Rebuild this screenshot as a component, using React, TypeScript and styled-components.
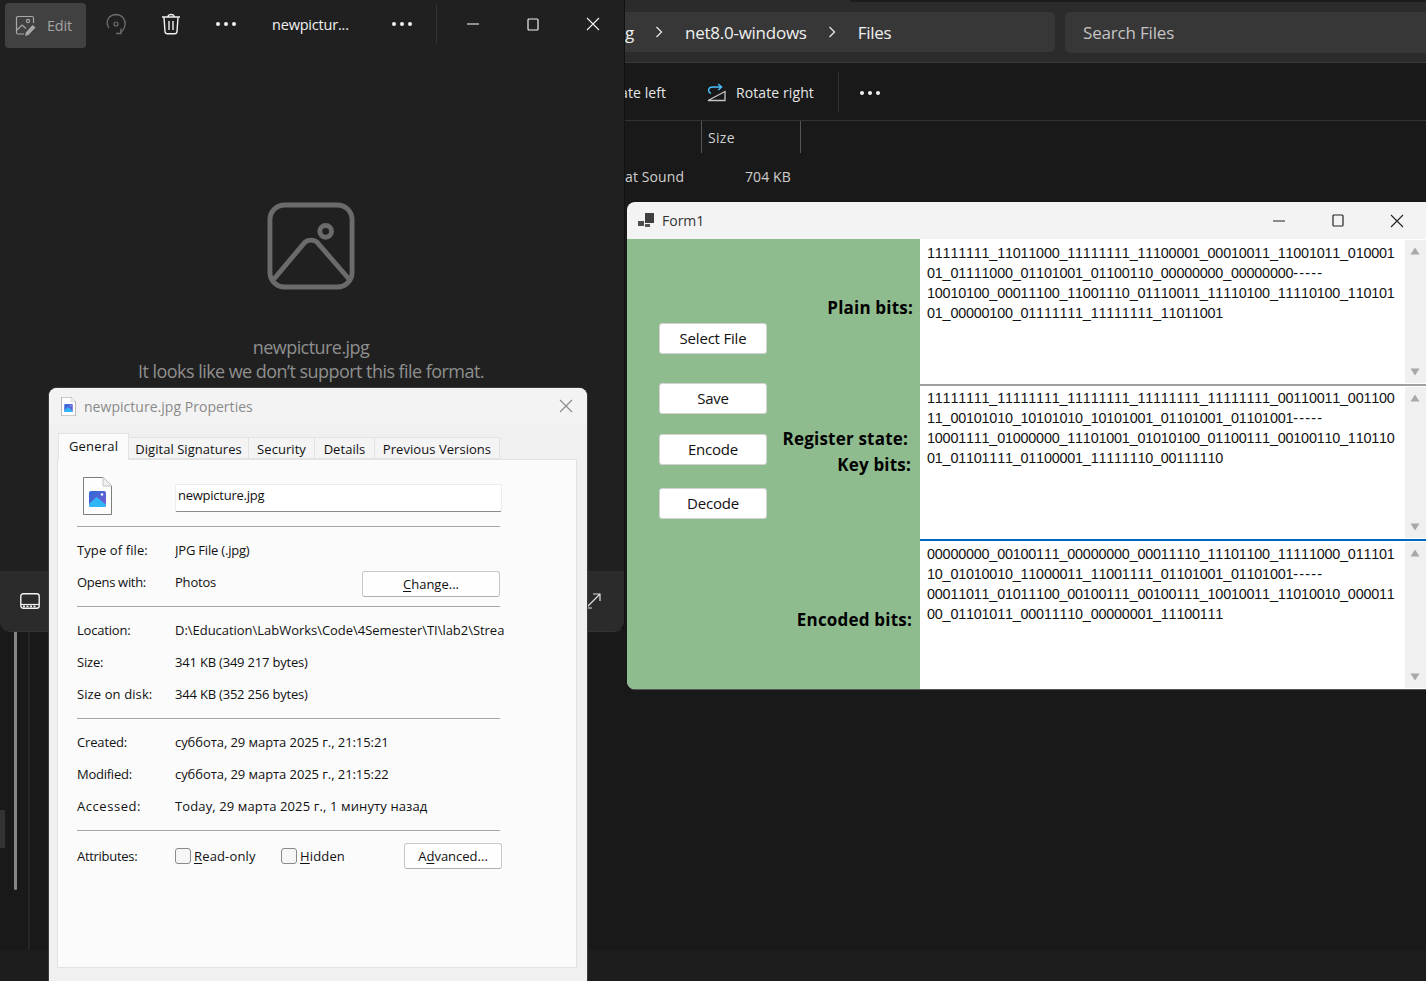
import React from "react";
import styled, { createGlobalStyle } from "styled-components";

const Global = createGlobalStyle`
  html, body { margin: 0; padding: 0; background: #1a1a1a; }
  body { width: 1426px; height: 981px; overflow: hidden; font-family: "Noto Sans", "Open Sans", sans-serif; }
  * { box-sizing: border-box; }
`;

const UI = `"Open Sans", "Noto Sans", sans-serif`;

const Desktop = styled.div`
  position: relative;
  width: 1426px;
  height: 981px;
  overflow: hidden;
  background: #191919;
`;

/* ---------- Explorer (background window) ---------- */
const Explorer = styled.div`
  position: absolute;
  inset: 0;
  display: flex;
  flex-direction: column;
  color: #e6e6e6;
  font-family: ${UI};
`;
const ExplorerHeader = styled.div`
  height: 63px;
  flex: none;
  background: #2b2b2b;
  border-bottom: 1px solid #3a3a3a;
  display: flex;
  padding: 12px 0 0 560px;
  gap: 10px;
  position: relative;
`;
const TabStripEdge = styled.div`
  position: absolute;
  left: 850px;
  right: 0;
  top: 0;
  height: 2px;
  background: #1c1c1c;
`;
const AddressBar = styled.div`
  width: 495px;
  height: 40px;
  background: #373737;
  border-radius: 5px;
  display: flex;
  align-items: center;
  padding-left: 65px;
  font-size: 17px;
  letter-spacing: -0.25px;
  color: #f0f0f0;
`;
const Crumb = styled.span`
  white-space: nowrap;
`;
const Chevron = styled.svg`
  width: 10px;
  height: 12px;
  margin: 0 21px 0 20px;
  flex: none;
`;
const SearchBar = styled.div`
  flex: 1;
  height: 41px;
  background: #373737;
  border-radius: 5px 0 0 5px;
  display: flex;
  align-items: center;
  padding-left: 18px;
  font-size: 17px;
  letter-spacing: -0.18px;
  color: #c4c4c4;
`;
const ExplorerToolbar = styled.div`
  height: 58px;
  flex: none;
  border-bottom: 1px solid #333;
  background: #191919;
  display: flex;
  align-items: center;
  padding: 2px 0 0 620px;
  font-size: 14px;
  letter-spacing: 0.1px;
`;
const ToolLabel = styled.span<{ $w: number }>`
  width: ${(p) => p.$w}px;
  white-space: nowrap;
  flex: none;
`;
const RotateIcon = styled.svg`
  flex: none;
  margin-right: 10px;
`;
const ToolDivider = styled.div`
  width: 1px;
  height: 40px;
  background: #333;
  margin: -2px 20px 0 23px;
`;
const MoreIcon = styled.svg`
  flex: none;
`;
const ColumnHeader = styled.div`
  height: 33px;
  flex: none;
  padding-left: 701px;
  display: flex;
`;
const ColumnCell = styled.div`
  width: 100px;
  height: 32px;
  border-left: 1px solid #555;
  border-right: 1px solid #555;
  padding-left: 6px;
  font-size: 14px;
  line-height: 33px;
  letter-spacing: 0.3px;
  color: #cfcfcf;
`;
const FileRow = styled.div`
  display: flex;
  height: 44px;
  padding-left: 625px;
  align-items: center;
  font-size: 14px;
  letter-spacing: 0.1px;
  color: #cfcfcf;
`;
const FileKind = styled.span`
  width: 120px;
`;
const ExplorerBody = styled.div`
  flex: 1;
  position: relative;
`;
const ExplorerStatus = styled.div`
  height: 31px;
  flex: none;
  background: #1d1d1d;
`;
const SideScroll = styled.div`
  position: absolute;
  left: 14px;
  top: 432px;
  width: 3px;
  height: 260px;
  background: #858585;
  border-radius: 2px;
`;
const SideLine = styled.div`
  position: absolute;
  left: 28px;
  top: 432px;
  width: 2px;
  height: 320px;
  background: #262626;
`;
const SideSelect = styled.div`
  position: absolute;
  left: 0;
  top: 612px;
  width: 5px;
  height: 38px;
  background: #333;
`;

/* ---------- Photos ---------- */
const Photos = styled.div`
  position: absolute;
  left: 0;
  top: 0;
  width: 625px;
  height: 632px;
  background: #202020;
  border-right: 1px solid #111;
  border-bottom: 1px solid #333;
  border-radius: 0 0 10px 10px;
  display: flex;
  flex-direction: column;
  color: #fff;
  font-family: ${UI};
`;
const PhotosBar = styled.div`
  height: 48px;
  flex: none;
  display: flex;
  align-items: center;
  position: relative;
`;
const EditButton = styled.div`
  width: 81px;
  height: 45px;
  margin: 3px 0 0 5px;
  border-radius: 4px;
  background: #414141;
  display: flex;
  align-items: center;
  gap: 10px;
  padding-left: 10px;
  font-size: 14.5px;
  letter-spacing: -0.2px;
  color: #a3a3a3;
`;
const BarIcon = styled.svg<{ $ml: number }>`
  flex: none;
  margin-left: ${(p) => p.$ml}px;
`;
const FileTitle = styled.span`
  margin-left: 35px;
  font-size: 14.5px;
  letter-spacing: -0.2px;
  width: 107px;
  white-space: nowrap;
  color: #f2f2f2;
`;
const BarDivider = styled.div`
  width: 1px;
  height: 40px;
  background: #333;
  margin-left: 23px;
`;
const PhotosCenter = styled.div`
  flex: 1;
  display: flex;
  flex-direction: column;
  align-items: center;
  padding-top: 154px;
  color: #8f8f8f;
  font-size: 18px;
  letter-spacing: -0.55px;
  line-height: 24px;
`;
const BrokenImage = styled.svg`
  margin-right: 2px;
  flex: none;
`;
const PhotoMessage = styled.div`
  margin-top: 45px;
  text-align: center;
  margin-right: 2px;
`;
const PhotosFoot = styled.div`
  height: 60px;
  flex: none;
  background: #2b2b2b;
  border-radius: 0 0 10px 10px;
  display: flex;
  align-items: center;
  justify-content: space-between;
  padding: 0 23px 0 20px;
`;

/* ---------- Properties dialog ---------- */
const Dialog = styled.div`
  position: absolute;
  left: 49px;
  top: 388px;
  width: 538px;
  height: 593px;
  background: #f0f0f0;
  border-radius: 8px 8px 0 0;
  box-shadow: 0 0 0 1px #3c3c3c;
  font-family: ${UI};
  font-size: 13px;
  letter-spacing: 0;
  color: #111;
  display: flex;
  flex-direction: column;
`;
const DialogTitle = styled.div`
  height: 36px;
  flex: none;
  background: #f3f3f3;
  border-radius: 8px 8px 0 0;
  display: flex;
  align-items: center;
  padding-left: 12px;
  font-size: 14px;
  letter-spacing: 0.03px;
  color: #8a8a8a;
`;
const DialogTitleText = styled.span`
  margin-left: 8px;
  flex: 1;
`;
const CloseIcon = styled.svg`
  flex: none;
  margin-right: 14px;
`;
const Tabs = styled.div`
  display: flex;
  align-items: flex-end;
  height: 35px;
  flex: none;
  padding-left: 9px;
`;
const Tab = styled.div<{ $active?: boolean; $w: number }>`
  width: ${(p) => p.$w}px;
  height: ${(p) => (p.$active ? 27 : 22)}px;
  margin-bottom: ${(p) => (p.$active ? -1 : 0)}px;
  position: relative;
  z-index: ${(p) => (p.$active ? 1 : 0)};
  background: ${(p) => (p.$active ? "#fbfbfb" : "#f4f4f4")};
  border: 1px solid #e3e3e3;
  border-bottom: ${(p) => (p.$active ? "none" : "1px solid #e3e3e3")};
  border-left: ${(p) => (p.$active ? "1px solid #e3e3e3" : "none")};
  text-align: center;
  line-height: ${(p) => (p.$active ? 24 : 22)}px;
  white-space: nowrap;
  letter-spacing: ${(p) => (p.$active ? 0.2 : 0.05)}px;
`;
const TabPanel = styled.div`
  margin: 0 10px 13px 8px;
  height: 509px;
  background: #fbfbfb;
  border: 1px solid #e3e3e3;
  padding: 17px 0 0 19px;
  display: flex;
  flex-direction: column;
  position: relative;
`;
const NameRow = styled.div`
  display: flex;
  height: 49px;
  flex: none;
  align-items: flex-start;
  padding-left: 6px;
`;
const NameInput = styled.div`
  margin-left: 63px;
  margin-top: 7px;
  width: 327px;
  height: 28px;
  background: #fff;
  border: 1px solid #ececec;
  border-bottom: 1px solid #8a8a8a;
  border-radius: 2px;
  padding-left: 2px;
  line-height: 21px;
  letter-spacing: -0.25px;
  color: #111;
`;
const Rule = styled.div<{ $mt?: number }>`
  width: 423px;
  height: 1px;
  background: #a6a6a6;
  flex: none;
  margin-top: ${(p) => p.$mt ?? 0}px;
`;
const InfoRow = styled.div<{ $mt?: number }>`
  display: flex;
  height: 32px;
  flex: none;
  align-items: center;
  margin-top: ${(p) => p.$mt ?? 0}px;
  position: relative;
  white-space: nowrap;
`;
const InfoKey = styled.span<{ $ls?: number }>`
  width: 98px;
  flex: none;
  letter-spacing: ${(p) => p.$ls ?? 0}px;
`;
const InfoValue = styled.span<{ $w?: number; $ls?: number }>`
  width: ${(p) => p.$w ?? 329}px;
  overflow: hidden;
  flex: none;
  letter-spacing: ${(p) => p.$ls ?? -0.2}px;
`;
const WinButton = styled.div<{ $w: number; $mt?: number }>`
  width: ${(p) => p.$w}px;
  height: 26px;
  margin-top: ${(p) => p.$mt ?? 0}px;
  background: #fefefe;
  border: 1px solid #c9c9c9;
  border-bottom-color: #b0b0b0;
  border-radius: 3px;
  text-align: center;
  line-height: 24px;
  flex: none;
`;
const CheckBox = styled.div`
  width: 16px;
  height: 16px;
  background: #f6f6f6;
  border: 1px solid #8a8a8a;
  border-radius: 3px;
  flex: none;
  margin-right: 3px;
`;
const CheckLabel = styled.span<{ $w: number }>`
  width: ${(p) => p.$w}px;
  flex: none;
  letter-spacing: 0.15px;
`;
const Key = styled.span`
  text-decoration: underline;
  text-underline-offset: 2px;
`;

/* ---------- Form1 ---------- */
const Form = styled.div`
  position: absolute;
  left: 627px;
  top: 202px;
  width: 799px;
  height: 487px;
  background: #f3f3f3;
  border-radius: 8px 0 0 8px;
  overflow: hidden;
  display: flex;
  flex-direction: column;
  font-family: "Noto Sans", sans-serif;
  box-shadow: 0 1px 0 #555;
`;
const FormTitle = styled.div`
  height: 37px;
  flex: none;
  display: flex;
  align-items: center;
  padding-left: 11px;
  font-family: ${UI};
  font-size: 14px;
  letter-spacing: 0;
  color: #333;
`;
const FormTitleText = styled.span`
  margin-left: 8px;
  flex: 1;
`;
const TitleEndSpace = styled.span`
  width: 22px;
  flex: none;
`;
const FormBody = styled.div`
  flex: 1;
  display: flex;
  min-height: 0;
`;
const GreenPanel = styled.div`
  width: 293px;
  flex: none;
  background: #8fbc8f;
  display: flex;
`;
const ButtonColumn = styled.div`
  width: 142px;
  flex: none;
  padding: 84px 0 0 32px;
  display: flex;
  flex-direction: column;
`;
const FormButton = styled.div<{ $mt: number }>`
  width: 108px;
  height: 31px;
  margin-top: ${(p) => p.$mt}px;
  background: #fff;
  border: 1px solid #d2d2d2;
  border-radius: 3px;
  text-align: center;
  line-height: 29px;
  font-family: ${UI};
  font-size: 15px;
  letter-spacing: -0.2px;
  color: #111;
`;
const LabelColumn = styled.div`
  flex: 1;
  display: flex;
  flex-direction: column;
  align-items: flex-end;
`;
const FieldLabel = styled.div<{ $mt: number; $mr: number }>`
  margin-top: ${(p) => p.$mt}px;
  margin-right: ${(p) => p.$mr}px;
  height: 24px;
  line-height: 24px;
  font-family: ${UI};
  font-weight: 700;
  font-size: 17px;
  letter-spacing: 0.2px;
  color: #000;
  white-space: nowrap;
`;
const FieldsColumn = styled.div`
  flex: 1;
  display: flex;
  flex-direction: column;
  background: #fff;
  min-width: 0;
`;
const Field = styled.div<{ $h: number; $line: string; $lh: number }>`
  height: ${(p) => p.$h}px;
  flex: none;
  display: flex;
  border-bottom: ${(p) => p.$lh}px solid ${(p) => p.$line};
`;
const BitsText = styled.div<{ $pt: number }>`
  flex: 1;
  padding: ${(p) => p.$pt}px 0 0 7px;
  font-family: "Liberation Sans", Arial, sans-serif;
  font-size: 14.4px;
  font-kerning: none;
  line-height: 20px;
  letter-spacing: -0.21px;
  color: #111;
  white-space: pre;
  overflow: hidden;
`;
const Dashes = styled.span`
  letter-spacing: 1.2px;
`;
const ScrollBar = styled.div`
  width: 21px;
  flex: none;
  background: #f0f0f0;
  display: flex;
  flex-direction: column;
  justify-content: space-between;
  align-items: center;
  padding: 7px 1px 7px 0;
  margin: 1px 0;
`;
const Arrow = styled.svg`
  display: block;
`;

/* ---------- small drawn parts ---------- */
const Dots = ({ ml }: { ml: number }) => (
  <BarIcon $ml={ml} width="22" height="6" viewBox="0 0 22 6">
    <circle cx="3" cy="3" r="2" fill="#f2f2f2" />
    <circle cx="11" cy="3" r="2" fill="#f2f2f2" />
    <circle cx="19" cy="3" r="2" fill="#f2f2f2" />
  </BarIcon>
);

const ChevronIcon = () => (
  <Chevron viewBox="0 0 10 12">
    <path d="M2.5 1 L7.5 6 L2.5 11" fill="none" stroke="#e6e6e6" strokeWidth="1.3" />
  </Chevron>
);

const ImageFileIcon = ({ w, h, id }: { w: number; h: number; id: string }) => (
  <svg width={w} height={h} viewBox="0 0 29 38">
    <defs>
      <linearGradient id={id} x1="0" y1="0" x2="1" y2="1">
        <stop offset="0" stopColor="#2a6ad8" />
        <stop offset="1" stopColor="#7c5cd0" />
      </linearGradient>
    </defs>
    <path d="M0.5 0.5 H20 L28.5 9 V37.5 H0.5 Z" fill="#fdfdfd" stroke="#7d7d7d" />
    <path d="M20 0.5 V9 H28.5" fill="#f1f1f1" stroke="#c4c4c4" />
    <rect x="6" y="14" width="17" height="16" rx="2" fill={`url(#${id})`} />
    <path d="M6 27 L13.5 20 L23 27.5 V28 A2 2 0 0 1 21 30 H8 A2 2 0 0 1 6 28 Z" fill="#31b6f5" />
    <circle cx="19" cy="17.5" r="1.2" fill="#fff" />
  </svg>
);

const WinGlyphs = ({ color, w1, w2, w3 }: { color: string; w1: number; w2: number; w3: number }) => (
  <>
    <BarIcon $ml={w1} width="14" height="14" viewBox="0 0 14 14">
      <path d="M1 7 H13" stroke={color} strokeWidth="1.1" />
    </BarIcon>
    <BarIcon $ml={w2} width="12" height="13" viewBox="0 0 12 13">
      <rect x="1" y="1" width="10" height="11" rx="1" fill="none" stroke={color} strokeWidth="1.2" />
    </BarIcon>
    <BarIcon $ml={w3} width="14" height="14" viewBox="0 0 14 14">
      <path d="M1 1 L13 13 M13 1 L1 13" stroke={color} strokeWidth="1.1" />
    </BarIcon>
  </>
);

const ScrollArrows = () => (
  <ScrollBar>
    <Arrow width="10" height="8" viewBox="0 0 10 8"><path d="M5 0.5 L9.5 7.5 H0.5 Z" fill="#a8a8a8" /></Arrow>
    <Arrow width="10" height="8" viewBox="0 0 10 8"><path d="M0.5 0.5 H9.5 L5 7.5 Z" fill="#a8a8a8" /></Arrow>
  </ScrollBar>
);

const Bits = ({ pt, lines }: { pt: number; lines: [string, string, string, string] }) => (
  <BitsText $pt={pt}>
    {lines[0]}
    {"\n"}
    {lines[1]}
    <Dashes>-----</Dashes>
    {"\n"}
    {lines[2]}
    {"\n"}
    {lines[3]}
  </BitsText>
);

export default function App() {
  return (
    <Desktop>
      <Global />
      <Explorer>
        <ExplorerHeader>
          <TabStripEdge />
          <AddressBar>
            <Crumb>g</Crumb>
            <ChevronIcon />
            <Crumb>net8.0-windows</Crumb>
            <ChevronIcon />
            <Crumb>Files</Crumb>
          </AddressBar>
          <SearchBar>Search Files</SearchBar>
        </ExplorerHeader>
        <ExplorerToolbar>
          <ToolLabel $w={86}>ate left</ToolLabel>
          <RotateIcon width="20" height="20" viewBox="0 0 20 20">
            <path d="M5 10.5 C1.5 9 1.5 4 7 4 H15.5 M12.2 1 L15.7 4 L12.2 7" fill="none" stroke="#4cc2ff" strokeWidth="1.3" />
            <path d="M2 17.5 L19 8.5 V17.5 Z" fill="none" stroke="#c4c4c4" strokeWidth="1.3" />
          </RotateIcon>
          <ToolLabel $w={79}>Rotate right</ToolLabel>
          <ToolDivider />
          <MoreIcon width="22" height="6" viewBox="0 0 22 6">
            <circle cx="3" cy="3" r="2" fill="#f2f2f2" />
            <circle cx="11" cy="3" r="2" fill="#f2f2f2" />
            <circle cx="19" cy="3" r="2" fill="#f2f2f2" />
          </MoreIcon>
        </ExplorerToolbar>
        <ColumnHeader>
          <ColumnCell>Size</ColumnCell>
        </ColumnHeader>
        <FileRow>
          <FileKind>at Sound</FileKind>
          <span>704 KB</span>
        </FileRow>
        <ExplorerBody>
          <SideScroll />
          <SideLine />
          <SideSelect />
        </ExplorerBody>
        <ExplorerStatus />
      </Explorer>

      <Photos>
        <PhotosBar>
          <EditButton>
            <svg width="22" height="22" viewBox="0 0 22 22">
              <path d="M9 19 H3 a1.5 1.5 0 0 1 -1.5 -1.5 V3 a1.5 1.5 0 0 1 1.5 -1.5 H17 a1.5 1.5 0 0 1 1.5 1.5 V8" fill="none" stroke="#a8a8a8" strokeWidth="1.2" />
              <path d="M2 15 L7 10 L11 13.5" fill="none" stroke="#a8a8a8" strokeWidth="1.2" />
              <circle cx="13" cy="6" r="1.6" fill="none" stroke="#a8a8a8" strokeWidth="1.1" />
              <path d="M17.5 10 L20.5 12.5 L13.5 20 L10 21 L10.8 17.5 Z" fill="#a8a8a8" />
            </svg>
            Edit
          </EditButton>
          <BarIcon $ml={19} width="22" height="22" viewBox="0 0 22 22">
            <path d="M4 15 C0 9 3 2 11 1.5 C17 1.5 21 7 20 12 C19.5 15 18 18 15 19.5" fill="none" stroke="#6c6c6c" strokeWidth="1.3" />
            <path d="M11 20.5 H16 V15.5" fill="none" stroke="#6c6c6c" strokeWidth="1.3" />
            <circle cx="11" cy="11" r="2" fill="none" stroke="#6c6c6c" strokeWidth="1.2" />
          </BarIcon>
          <BarIcon $ml={34} width="20" height="22" viewBox="0 0 20 22">
            <path d="M1 4 H19 M7 3.5 C7 0.8 13 0.8 13 3.5" fill="none" stroke="#f2f2f2" strokeWidth="1.4" />
            <path d="M3 4.5 L4 18.5 C4.1 20 5 20.8 6.5 20.8 H13.5 C15 20.8 15.9 20 16 18.5 L17 4.5" fill="none" stroke="#f2f2f2" strokeWidth="1.4" />
            <path d="M8 8 V17 M12 8 V17" fill="none" stroke="#f2f2f2" strokeWidth="1.4" />
          </BarIcon>
          <Dots ml={34} />
          <FileTitle>newpictur...</FileTitle>
          <Dots ml={12} />
          <BarDivider />
          <WinGlyphs color="#f0f0f0" w1={29} w2={47} w3={47} />
        </PhotosBar>
        <PhotosCenter>
          <BrokenImage width="88" height="88" viewBox="0 0 90 90">
            <rect x="3" y="3" width="84" height="84" rx="15" fill="none" stroke="#6b6b6b" strokeWidth="5" />
            <path d="M7 79 L38 42 C41 38 49 38 52 42 L84 79" fill="none" stroke="#6b6b6b" strokeWidth="5" strokeLinejoin="round" />
            <circle cx="60" cy="30" r="6" fill="none" stroke="#6b6b6b" strokeWidth="5" />
          </BrokenImage>
          <PhotoMessage>
            newpicture.jpg
            <br />
            It looks like we don’t support this file format.
          </PhotoMessage>
        </PhotosCenter>
        <PhotosFoot>
          <svg width="20" height="16" viewBox="0 0 20 16">
            <rect x="0.8" y="0.8" width="18.4" height="14.4" rx="2.5" fill="none" stroke="#f2f2f2" strokeWidth="1.4" />
            <path d="M1 11.5 H19" stroke="#f2f2f2" strokeWidth="1.2" />
            <path d="M3 13.4 H17" stroke="#f2f2f2" strokeWidth="1.6" strokeDasharray="2 1.5" />
          </svg>
          <svg width="16" height="16" viewBox="0 0 16 16">
            <path d="M1 15 L15 1 M8 1 H15 V8 M1 9 V15 H7" fill="none" stroke="#e0e0e0" strokeWidth="1.2" />
          </svg>
        </PhotosFoot>
      </Photos>

      <Dialog>
        <DialogTitle>
          <ImageFileIcon w={15} h={19} id="imgSkySmall" />
          <DialogTitleText>newpicture.jpg Properties</DialogTitleText>
          <CloseIcon width="14" height="14" viewBox="0 0 14 14">
            <path d="M1 1 L13 13 M13 1 L1 13" stroke="#8a8a8a" strokeWidth="1.1" />
          </CloseIcon>
        </DialogTitle>
        <Tabs>
          <Tab $active $w={71}>General</Tab>
          <Tab $w={120}>Digital Signatures</Tab>
          <Tab $w={66}>Security</Tab>
          <Tab $w={60}>Details</Tab>
          <Tab $w={125}>Previous Versions</Tab>
        </Tabs>
        <TabPanel>
          <NameRow>
            <ImageFileIcon w={29} h={38} id="imgSkyLarge" />
            <NameInput>newpicture.jpg</NameInput>
          </NameRow>
          <Rule />
          <InfoRow $mt={7}>
            <InfoKey $ls={0.1}>Type of file:</InfoKey>
            <InfoValue>JPG File (.jpg)</InfoValue>
          </InfoRow>
          <InfoRow>
            <InfoKey $ls={-0.3}>Opens with:</InfoKey>
            <InfoValue $w={187}>Photos</InfoValue>
            <WinButton $w={138} $mt={4}><Key>C</Key>hange...</WinButton>
          </InfoRow>
          <Rule $mt={8} />
          <InfoRow $mt={7}>
            <InfoKey $ls={-0.2}>Location:</InfoKey>
            <InfoValue $ls={-0.03}>D:\Education\LabWorks\Code\4Semester\TI\lab2\Strea</InfoValue>
          </InfoRow>
          <InfoRow>
            <InfoKey $ls={-0.2}>Size:</InfoKey>
            <InfoValue>341 KB (349 217 bytes)</InfoValue>
          </InfoRow>
          <InfoRow>
            <InfoKey $ls={0.1}>Size on disk:</InfoKey>
            <InfoValue>344 KB (352 256 bytes)</InfoValue>
          </InfoRow>
          <Rule $mt={8} />
          <InfoRow $mt={7}>
            <InfoKey $ls={-0.15}>Created:</InfoKey>
            <InfoValue $ls={-0.07}>суббота, 29 марта 2025 г., 21:15:21</InfoValue>
          </InfoRow>
          <InfoRow>
            <InfoKey $ls={-0.25}>Modified:</InfoKey>
            <InfoValue $ls={-0.07}>суббота, 29 марта 2025 г., 21:15:22</InfoValue>
          </InfoRow>
          <InfoRow>
            <InfoKey $ls={0.55}>Accessed:</InfoKey>
            <InfoValue $ls={0.12}>Today, 29 марта 2025 г., 1 минуту назад</InfoValue>
          </InfoRow>
          <Rule $mt={8} />
          <InfoRow $mt={9}>
            <InfoKey $ls={-0.3}>Attributes:</InfoKey>
            <CheckBox />
            <CheckLabel $w={87}><Key>R</Key>ead-only</CheckLabel>
            <CheckBox />
            <CheckLabel $w={104}><Key>H</Key>idden</CheckLabel>
            <WinButton $w={98}>A<Key>d</Key>vanced...</WinButton>
          </InfoRow>
        </TabPanel>
      </Dialog>

      <Form>
        <FormTitle>
          <svg width="16" height="16" viewBox="0 0 16 16">
            <rect x="7" y="0" width="9" height="10" fill="#3f3f3f" />
            <rect x="0" y="8" width="6" height="5" fill="#4c4c4c" />
            <rect x="7" y="11" width="5" height="3" fill="#555" />
          </svg>
          <FormTitleText>Form1</FormTitleText>
          <WinGlyphs color="#222" w1={0} w2={46} w3={46} />
          <TitleEndSpace />
        </FormTitle>
        <FormBody>
          <GreenPanel>
            <ButtonColumn>
              <FormButton $mt={0}>Select File</FormButton>
              <FormButton $mt={29}>Save</FormButton>
              <FormButton $mt={20}>Encode</FormButton>
              <FormButton $mt={23}>Decode</FormButton>
            </ButtonColumn>
            <LabelColumn>
              <FieldLabel $mt={57} $mr={7}>Plain bits:</FieldLabel>
              <FieldLabel $mt={107} $mr={12}>Register state:</FieldLabel>
              <FieldLabel $mt={2} $mr={9}>Key bits:</FieldLabel>
              <FieldLabel $mt={131} $mr={8}>Encoded bits:</FieldLabel>
            </LabelColumn>
          </GreenPanel>
          <FieldsColumn>
            <Field $h={147} $line="#a0a0a0" $lh={2}>
              <Bits
                pt={4}
                lines={[
                  "11111111_11011000_11111111_11100001_00010011_11001011_010001",
                  "01_01111000_01101001_01100110_00000000_00000000",
                  "10010100_00011100_11001110_01110011_11110100_11110100_110101",
                  "01_00000100_01111111_11111111_11011001",
                ]}
              />
              <ScrollArrows />
            </Field>
            <Field $h={155} $line="#0067c0" $lh={2}>
              <Bits
                pt={2}
                lines={[
                  "11111111_11111111_11111111_11111111_11111111_00110011_001100",
                  "11_00101010_10101010_10101001_01101001_01101001",
                  "10001111_01000000_11101001_01010100_01100111_00100110_110110",
                  "01_01101111_01100001_11111110_00111110",
                ]}
              />
              <ScrollArrows />
            </Field>
            <Field $h={148} $line="#808080" $lh={0}>
              <Bits
                pt={3}
                lines={[
                  "00000000_00100111_00000000_00011110_11101100_11111000_011101",
                  "10_01010010_11000011_11001111_01101001_01101001",
                  "00011011_01011100_00100111_00100111_10010011_11010010_000011",
                  "00_01101011_00011110_00000001_11100111",
                ]}
              />
              <ScrollArrows />
            </Field>
          </FieldsColumn>
        </FormBody>
      </Form>
    </Desktop>
  );
}
